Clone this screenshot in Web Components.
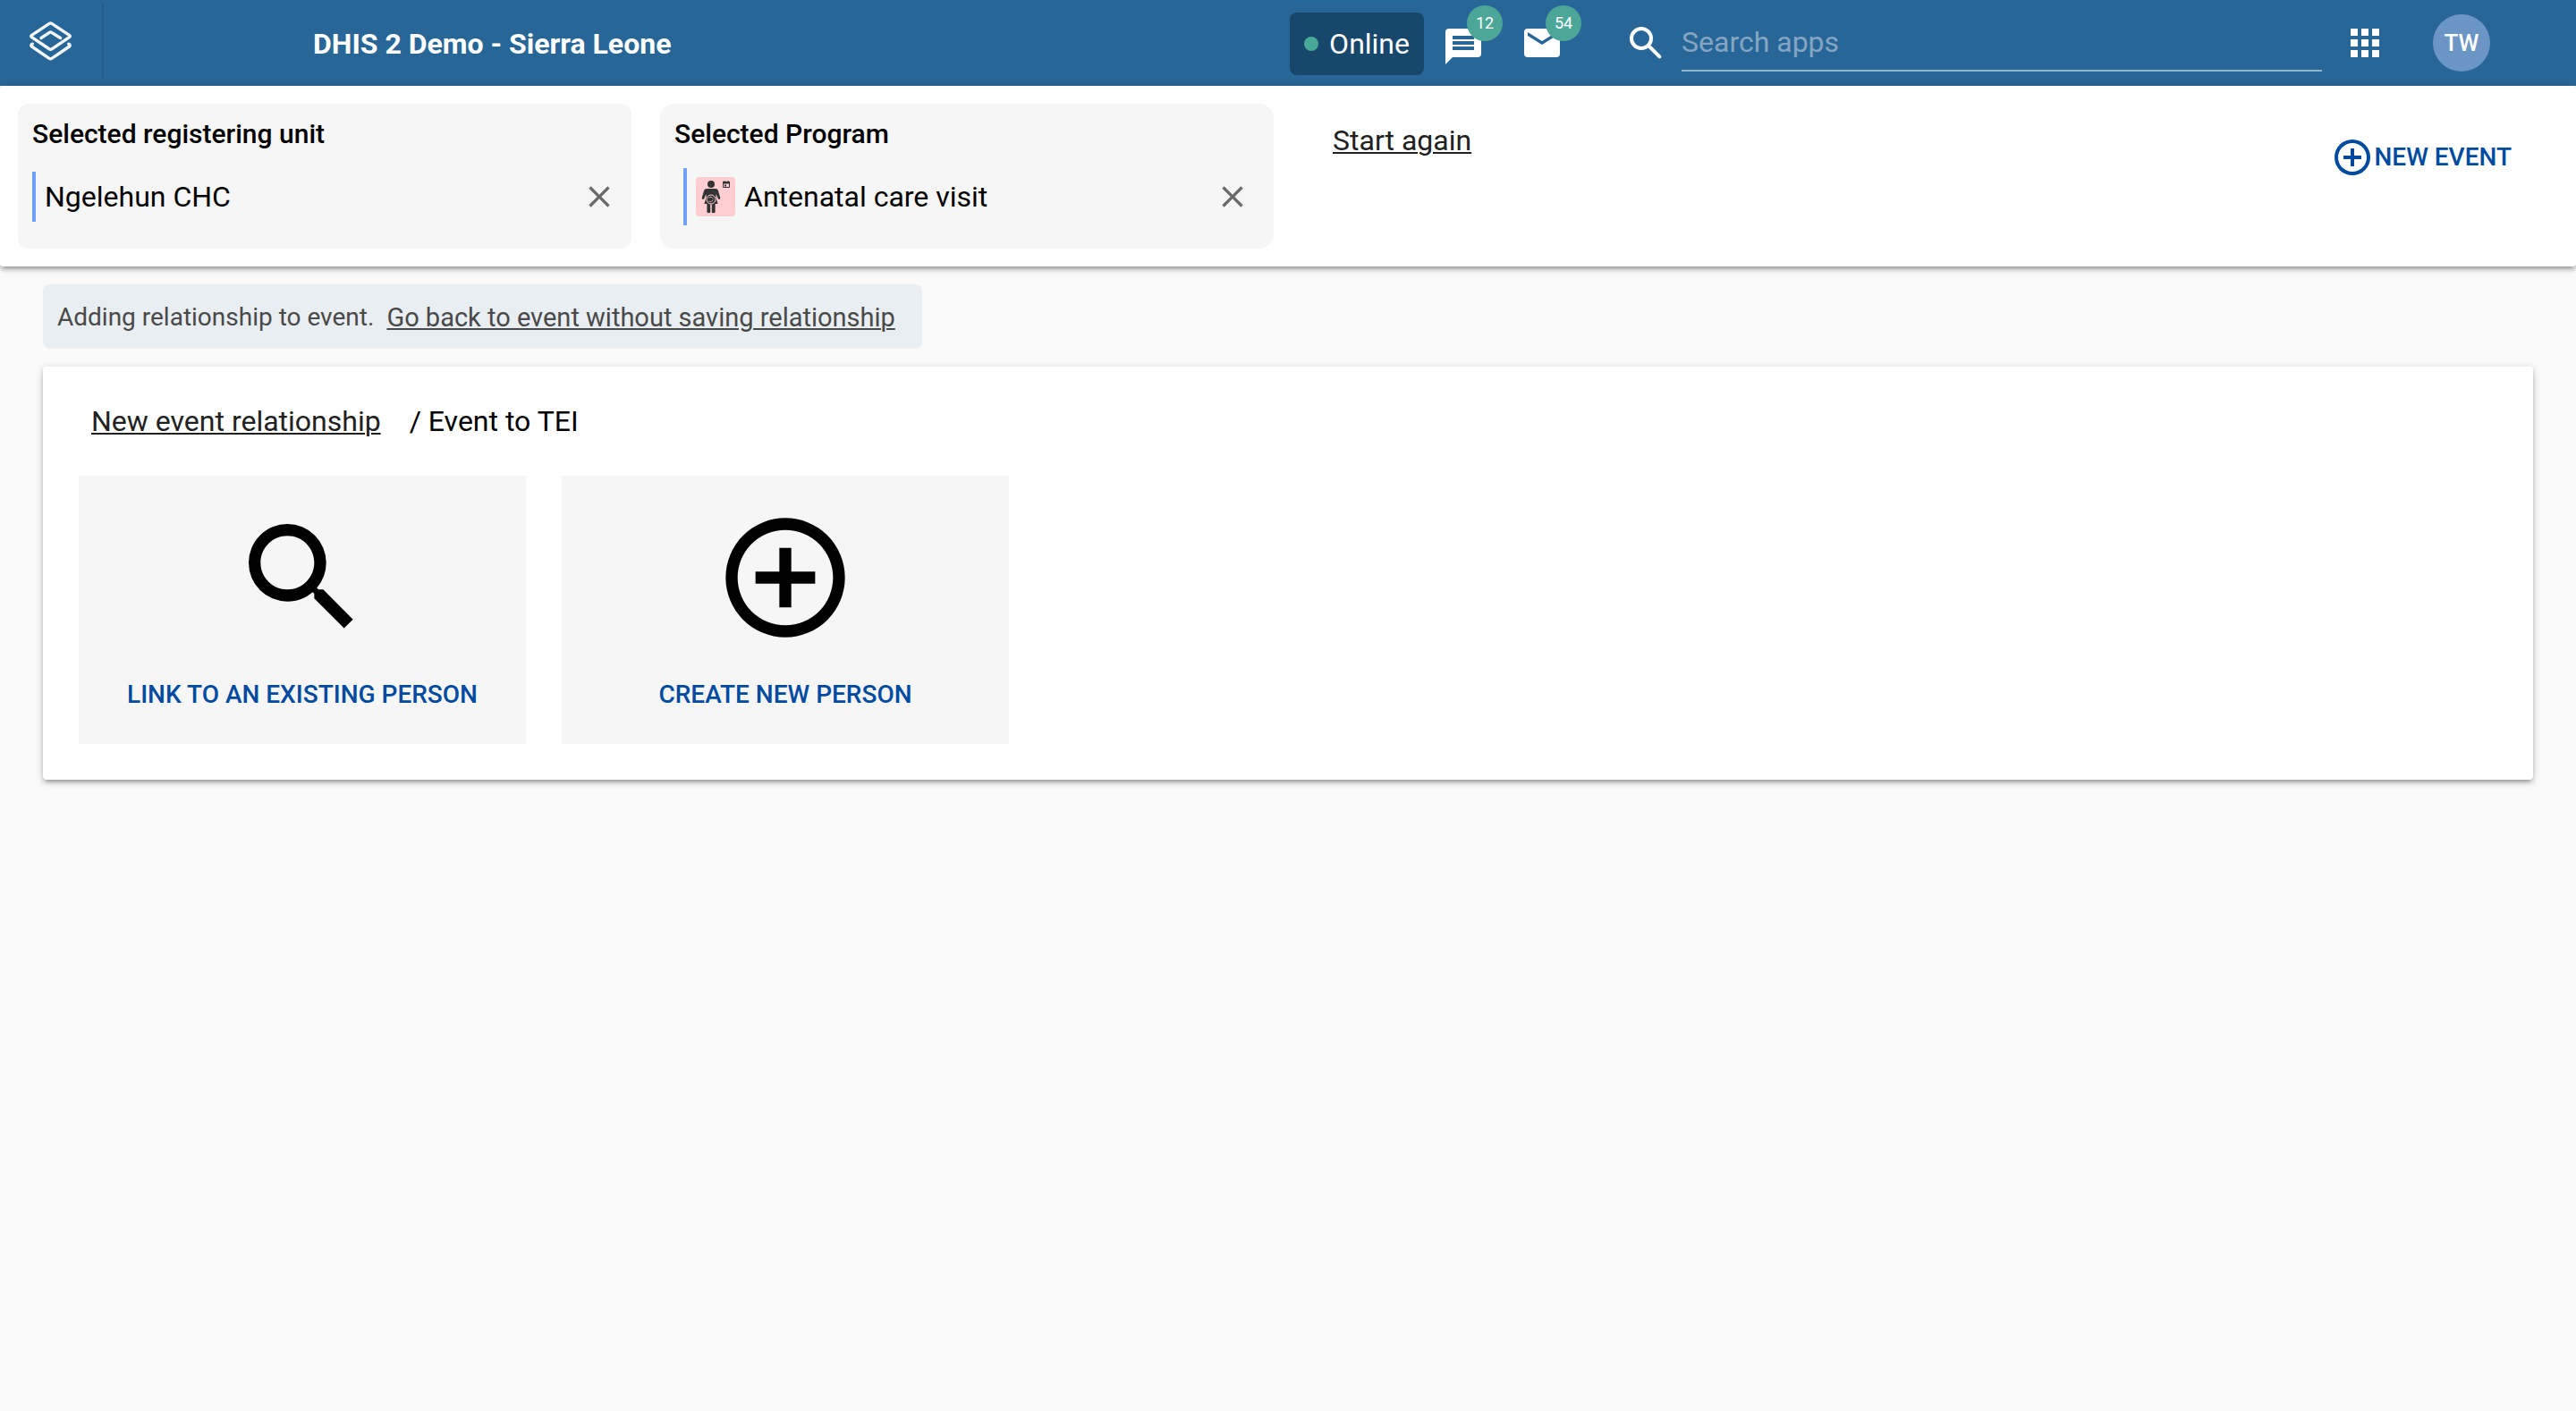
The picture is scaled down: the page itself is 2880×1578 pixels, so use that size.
<!DOCTYPE html>
<html lang="en">
<head>
<meta charset="utf-8">
<title>DHIS 2 Demo - Sierra Leone</title>
<style>
  body { margin: 0; min-height: 100vh; background: #fafafa; color: #000; font-family: Roboto, "Liberation Sans", sans-serif; font-size: 32px; line-height: 38px; }
</style>
</head>
<body>
<capture-app></capture-app>

<script>
const base = `
  *, *::before { box-sizing: border-box; }
  svg { display: block; flex: none; }
  a { color: inherit; text-decoration-thickness: 2px; text-underline-offset: 2px; }
  button { appearance: none; border: 0; margin: 0; padding: 0; background: none; color: inherit; font: inherit; cursor: pointer; }
`;

function define(name, css, html) {
  const template = document.createElement('template');
  customElements.define(name, class extends HTMLElement {
    constructor() {
      super();
      this.attachShadow({ mode: 'open' });
      template.innerHTML = `<style>${base}${css}</style>${typeof html === 'function' ? html(this) : html}`;
      this.shadowRoot.append(template.content.cloneNode(true));
    }
  });
}

const icons = {
  search: '<path d="M15.5 14h-.79l-.28-.27A6.47 6.47 0 0 0 16 9.5 6.5 6.5 0 1 0 9.5 16c1.61 0 3.09-.59 4.23-1.57l.27.28v.79l5 4.99L20.49 19l-4.99-5zm-6 0C7.01 14 5 11.99 5 9.5S7.01 5 9.5 5 14 7.01 14 9.5 11.99 14 9.5 14z"/>',
  'search-round': '<circle cx="9.5" cy="9.5" r="5.5" fill="none" stroke="currentColor" stroke-width="2"/><path d="M14.5 14.500l5.200 5.200" fill="none" stroke="currentColor" stroke-width="2" stroke-linecap="round"/>',
  plus: '<path d="M13 7h-2v4H7v2h4v4h2v-4h4v-2h-4V7zm-1-5a10 10 0 1 0 0 20 10 10 0 0 0 0-20zm0 18a8 8 0 1 1 0-16 8 8 0 0 1 0 16z"/>',
  close: '<path d="M19 6.41L17.59 5 12 10.59 6.41 5 5 6.41 10.59 12 5 17.59 6.41 19 12 13.41 17.59 19 19 17.59 13.41 12z"/>',
  apps: '<path d="M4 4h4v4H4zM10 4h4v4h-4zM16 4h4v4h-4zM4 10h4v4H4zM10 10h4v4h-4zM16 10h4v4h-4zM4 16h4v4H4zM10 16h4v4h-4zM16 16h4v4h-4z"/>',
  message: '<path d="M20 4H4a2 2 0 0 0-2 2v18l4-4h14a2 2 0 0 0 2-2V6a2 2 0 0 0-2-2zm-2 12H6v-2h12v2zm0-3H6v-2h12v2zm0-3H6V8h12v2z"/>',
  mail: '<path d="M20 4H4a2 2 0 0 0-2 2v12a2 2 0 0 0 2 2h16a2 2 0 0 0 2-2V6a2 2 0 0 0-2-2zm0 4l-8 5-8-5V6l8 5 8-5v2z"/>'
};

define('app-icon', `
  :host { display: block; flex: none; width: 48px; height: 48px; }
  svg { width: 100%; height: 100%; fill: currentColor; overflow: visible; }
`, el => `<svg viewBox="0 0 24 24" aria-hidden="true">${icons[el.getAttribute('name')]}</svg>`);

define('dhis-logo', `
  :host { display: block; width: 48px; height: 48px; }
  svg { width: 48px; height: 48px; fill: none; stroke: #f4f8fb; stroke-width: 3.4; stroke-linejoin: round; stroke-linecap: round; overflow: visible; }
`, `<svg viewBox="-0.5 -1 48 48" aria-hidden="true">
    <path d="M22.6 3.4Q24 2.5 25.4 3.4L45 16.3Q46.6 17.5 45 18.7L25.4 31.8Q24 32.7 22.6 31.8L3 18.7Q1.4 17.5 3 16.3Z"/>
    <path d="M13.5 19.5L22.8 13.4Q24 12.6 25.2 13.4L35 19.5"/>
    <path d="M3.8 26.2Q1.2 27.2 3 29L22.6 42.4Q24 43.3 25.4 42.4L45 29Q46.8 27.2 44.2 26.2"/>
  </svg>`);

define('count-link', `
  :host { display: block; }
  a { position: relative; display: block; color: #fff; text-decoration: none; }
  span { position: absolute; left: 28px; top: -18px; width: 40px; height: 40px; border-radius: 50%; background: #4ca799; font-size: 18px; line-height: 40px; text-align: center; }
`, el => `<a href="#" aria-label="${el.getAttribute('label')}"><app-icon name="${el.getAttribute('icon')}"></app-icon><span><slot></slot></span></a>`);

define('header-bar', `
  :host { display: flex; align-items: center; height: 96px; padding: 0 96px 0 32px; background: #276696; color: #fff; }
  .home { display: flex; align-items: center; height: 84px; padding-right: 34px; border-right: 2px solid #235c87; margin-bottom: 4px; }
  h1 { flex: 1; margin: 0; padding: 2px 0 0 234px; font-size: 32px; line-height: 38px; font-weight: 700; }
  .online { display: flex; align-items: center; gap: 12px; padding: 16px; margin: 2px 20px 0 0; border-radius: 8px; background: #17486c; }
  .online::before { content: ""; width: 16px; height: 16px; border-radius: 50%; background: #48a999; }
  .counts { display: flex; gap: 40px; margin-right: 68px; }
  label { display: flex; align-items: center; gap: 16px; margin-right: 24px; }
  input { width: 716px; height: 64px; padding: 0; border: 0; border-bottom: 2px solid #93b3cb; border-radius: 0; background: none; color: #fff; font: inherit; outline: 0; }
  input::placeholder { color: #84a6c4; opacity: 1; }
  .apps { margin-right: 52px; }
  .user { width: 64px; height: 64px; border-radius: 50%; background: #6b95c5; font-size: 26px; line-height: 64px; font-weight: 500; text-align: center; }
`, `
  <a class="home" href="#" aria-label="Home"><dhis-logo></dhis-logo></a>
  <h1>DHIS 2 Demo - Sierra Leone</h1>
  <div class="online">Online</div>
  <div class="counts">
    <count-link icon="message" label="Interpretations">12</count-link>
    <count-link icon="mail" label="Messages">54</count-link>
  </div>
  <label><app-icon name="search-round"></app-icon><input type="text" placeholder="Search apps" aria-label="Search apps"></label>
  <button class="apps" aria-label="Apps"><app-icon name="apps"></app-icon></button>
  <button class="user">TW</button>
`);

define('antenatal-icon', `
  :host { display: block; flex: none; width: 44px; height: 44px; margin: 0 10px; border-radius: 4px; background: #ffcdd2; }
  svg { width: 44px; height: 44px; }
`, `<svg viewBox="0 0 44 44" aria-hidden="true" fill="#333">
    <circle cx="17" cy="8" r="4"/>
    <path d="M12 13h10c1.6 0 2.6 1 3 2.4l2.2 7.6c.5 2-1.8 2.8-2.5 1L22.6 19l-.2 3.4 2.2 7.6h-3v9c0 1.6-3.8 1.6-3.8 0v-8.6h-1.6V39c0 1.6-3.8 1.6-3.8 0v-9h-3l2.2-7.6-.2-3.4L9.300 24c-.7 1.800-3 1-2.500-1L9 15.400C9.400 14 10.400 13 12 13z"/>
    <circle cx="17" cy="25" r="5" fill="none" stroke="#ffcdd2"/>
    <path d="M14 23.500c2-2 4-1 5.500.5M14.500 27c2 1.500 4 0 4.500-1.500" fill="none" stroke="#ffcdd2" stroke-width=".8"/>
    <path d="M30.500 5.500h7v6h-7z" fill="none" stroke="#333"/>
    <path d="M30 5h8v2.500h-8zM31.500 4h1v1h-1zM35.500 4h1v1h-1zM32 8.500h2v2h-2z"/>
  </svg>`);

define('selection-card', `
  :host { display: block; flex: 0 0 25%; padding: 20px 16px; }
  section { padding: 16px 16px 26px; border-radius: var(--card-radius, 12px); background: #f6f6f6; }
  h2 { margin: 0 0 20px; font-size: 30px; line-height: 36px; font-weight: 500; }
  .row { display: flex; align-items: center; height: 64px; padding: var(--row-padding, 0); }
  .value { display: flex; align-items: center; flex: 1; height: var(--bar-height, 56px); border-left: 4px solid #6ea1f7; padding-left: var(--text-gap, 10px); }
  button { color: #6a6a6a; }
  app-icon { width: 40px; height: 40px; }
`, el => `<section>
    <h2>${el.getAttribute('heading')}</h2>
    <div class="row"><div class="value"><slot></slot></div><button aria-label="Clear"><app-icon name="close"></app-icon></button></div>
  </section>`);

define('selection-bar', `
  :host { display: flex; padding: 0 4px; border-radius: 4px; background: #fff;
    box-shadow: 0 2px 10px rgba(0,0,0,.2), 0 4px 4px rgba(0,0,0,.14), 0 6px 2px -4px rgba(0,0,0,.12); }
  .program { --card-radius: 16px; --row-padding: 0 10px; --bar-height: 64px; --text-gap: 0; }
  .actions { display: flex; flex: 1; align-items: flex-start; justify-content: space-between; padding: 42px 68px 0 50px; }
  .actions a { color: #212121; }
  button { display: flex; align-items: center; margin-top: 14px; color: #004ba0; font-size: 28px; font-weight: 500; }
`, `
  <selection-card heading="Selected registering unit">Ngelehun CHC</selection-card>
  <selection-card class="program" heading="Selected Program"><antenatal-icon></antenatal-icon>Antenatal care visit</selection-card>
  <div class="actions"><a href="#">Start again</a><button><app-icon name="plus"></app-icon>NEW EVENT</button></div>
`);

define('notice-bar', `
  :host { display: flex; gap: 14px; width: fit-content; padding: 19px 30px 17px 16px; border-radius: 8px; background: #e9eef2; color: #494949; font-size: 28px; line-height: 36px; }
  a { font-size: 29px; }
`, `<span>Adding relationship to event.</span><a href="#">Go back to event without saving relationship</a>`);

define('choice-tile', `
  :host { display: block; }
  button { display: flex; flex-direction: column; align-items: center; gap: 32px; width: 500px; padding: 34px 0 36px; background: #f6f6f6; color: #004ba0; font-size: 28px; line-height: 38px; font-weight: 500; }
  app-icon { width: 160px; height: 160px; color: #000; }
`, el => `<button><app-icon name="${el.getAttribute('icon')}"></app-icon><span><slot></slot></span></button>`);

define('relationship-panel', `
  :host { display: block; padding: 42px 40px 40px; border-radius: 4px; background: #fff;
    box-shadow: 0 2px 10px rgba(0,0,0,.2), 0 4px 4px rgba(0,0,0,.14), 0 6px 2px -4px rgba(0,0,0,.12); }
  nav { display: flex; gap: 32px; padding-left: 14px; }
  nav a { color: #212121; }
  .tiles { display: flex; gap: 40px; margin-top: 42px; }
`, `
  <nav><a href="#">New event relationship</a><span>/ Event to TEI</span></nav>
  <div class="tiles">
    <choice-tile icon="search">LINK TO AN EXISTING PERSON</choice-tile>
    <choice-tile icon="plus">CREATE NEW PERSON</choice-tile>
  </div>
`);

define('capture-app', `
  :host { display: block; }
  main { display: flex; flex-direction: column; gap: 20px; padding: 20px 48px; }
`, `
  <header-bar></header-bar>
  <selection-bar></selection-bar>
  <main><notice-bar></notice-bar><relationship-panel></relationship-panel></main>
`);
</script>
</body>
</html>
